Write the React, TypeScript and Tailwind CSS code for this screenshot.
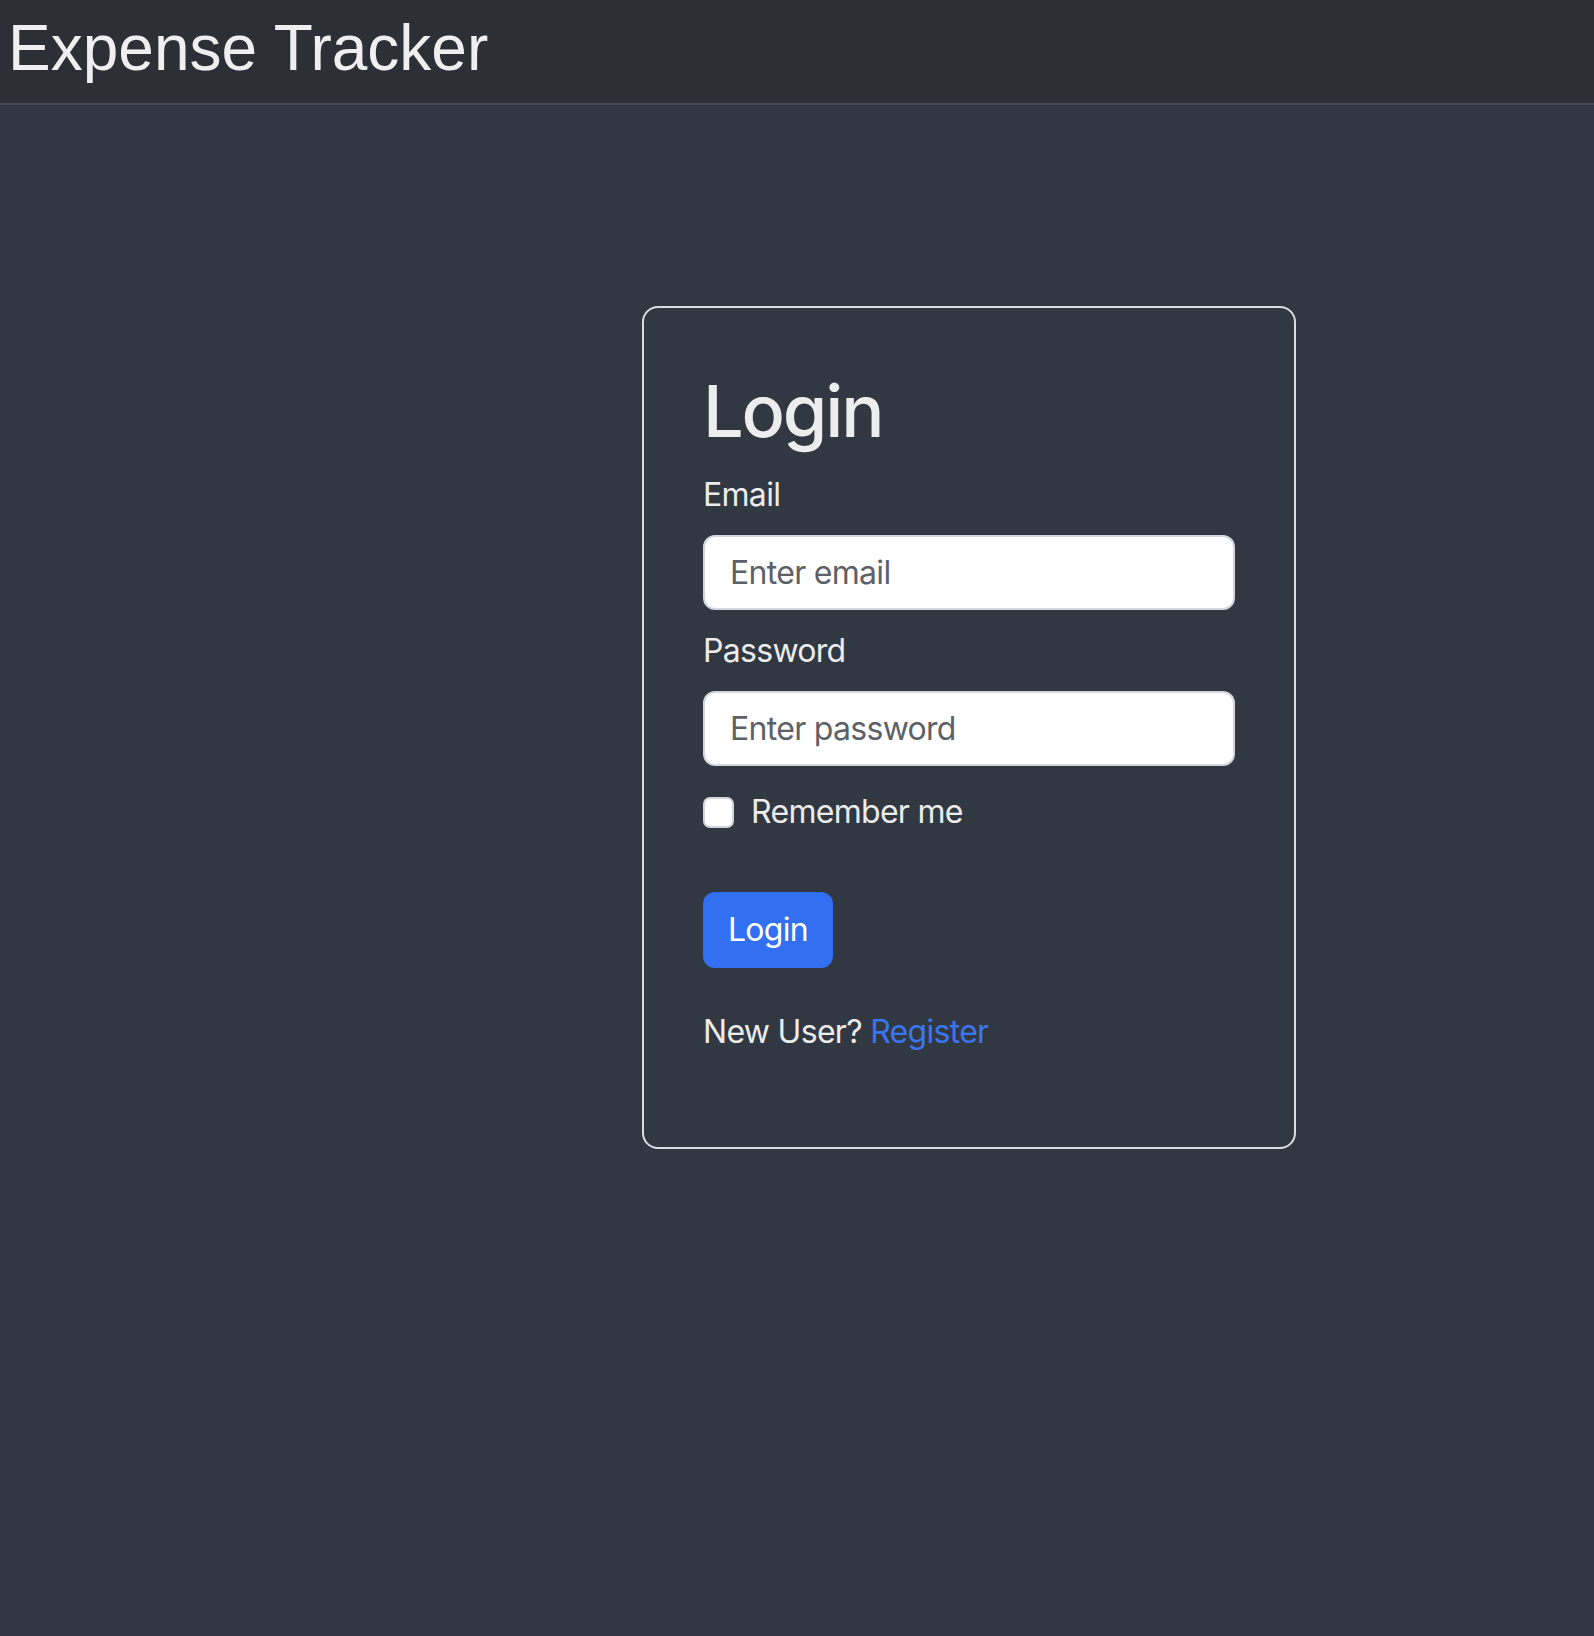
export default function App() {
  return (
    <div className="min-h-[1636px] w-full bg-[#323842] font-['Inter','Noto_Sans',sans-serif] text-[#ececec]">
      {/* Top bar */}
      <header className="h-[105px] border-b-2 border-[#474c54] bg-[#2c2f35] pl-[8px] pt-[12px]">
        <h1 className="font-['Liberation_Sans',Arial,sans-serif] text-[64px] leading-[72px] text-[#efefef]">
          Expense Tracker
        </h1>
      </header>

      {/* Login card */}
      <main className="pl-[642px] pt-[201px]">
        <div className="flex w-[654px] flex-col rounded-[16px] border-2 border-[#dcdde2] px-[59px] pt-[58px] pb-[91px] tracking-[-0.7px]">
          <h2 className="text-[72px] leading-[90px] font-medium tracking-[-2.2px] text-[#ededed]">Login</h2>

          <label className="mt-[15px] mb-[16px] text-[32px] leading-[48px]">Email</label>
          <input
            type="email"
            placeholder="Enter email"
            className="h-[75px] w-full rounded-[12px] border-2 border-[#d3d6dc] bg-white pl-[25px] text-[32px] tracking-[-0.7px] text-[#212529] outline-none placeholder:text-[#5d6167]"
          />

          <label className="mt-[17px] mb-[16px] text-[32px] leading-[48px]">Password</label>
          <input
            type="password"
            placeholder="Enter password"
            className="h-[75px] w-full rounded-[12px] border-2 border-[#d3d6dc] bg-white pl-[25px] text-[32px] tracking-[-0.7px] text-[#212529] outline-none placeholder:text-[#5d6167]"
          />

          <label className="mt-[22px] flex items-center gap-[17px] text-[32px] leading-[48px]">
            <input
              type="checkbox"
              className="h-[31px] w-[31px] appearance-none rounded-[7px] border-2 border-[#d3d6dc] bg-white"
            />
            Remember me
          </label>

          <div className="mt-[56px]">
            <button className="h-[76px] w-[130px] rounded-[12px] bg-[#3370f1] text-[32px] leading-[48px] tracking-[-0.7px] text-white">
              Login
            </button>
          </div>

          <p className="mt-[40px] text-[32px] leading-[48px]">
            New User? <a className="text-[#3a76f0]">Register</a>
          </p>
        </div>
      </main>
    </div>
  );
}
